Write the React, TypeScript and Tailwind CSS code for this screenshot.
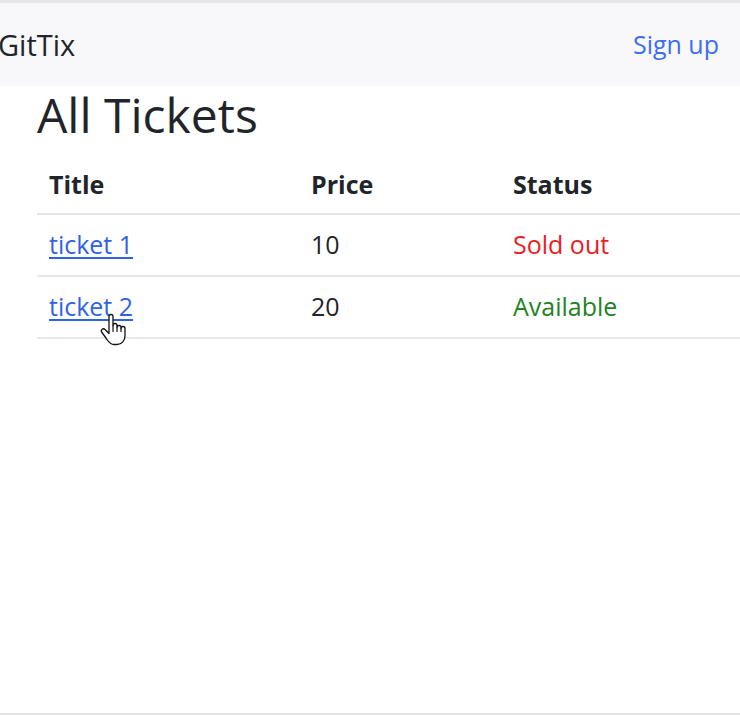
const tickets = [
  { id: 1, title: "ticket 1", price: 10, soldOut: true },
  { id: 2, title: "ticket 2", price: 20, soldOut: false },
];

function HandCursor() {
  return (
    <svg
      className="absolute left-[100px] top-[313px]"
      width="26"
      height="34"
      viewBox="0 0 26 33"
      fill="none"
    >
      <path
        d="M9 3A2 2 0 0 1 13 3V12A2 2 0 0 1 17 12V14A2 2 0 0 1 21 14V15A2 2 0 0 1 25 15V22C25 27 22 31 17 31H14C11 31 9 29 7 26L2 19A2 2 0 0 1 5 16L9 20V3Z"
        fill="#fff"
        stroke="#111"
        strokeWidth="1.3"
        strokeLinejoin="round"
      />
      <path d="M13 12V18M17 14V18M21 15V18" stroke="#111" strokeWidth="1.2" strokeLinecap="round" />
    </svg>
  );
}

export default function App() {
  return (
    <div
      className="relative h-[715px] overflow-hidden border-b-2 border-[#e4e4e4] bg-white text-[#212529]"
      style={{ fontFamily: '"Open Sans", "Noto Sans", sans-serif' }}
    >
      {/* Navbar */}
      <nav className="flex h-[86px] items-center justify-between border-t-[3px] border-[#e6e6e8] bg-[#f8f8fa] pr-[21px]">
        <a className="-ml-[2px] text-[29px] leading-none text-[#212529]">GitTix</a>
        <a className="text-[25px] leading-none text-[#3d6ef0]">Sign up</a>
      </nav>

      <div className="px-[37px]">
        <h1 className="text-[48px] leading-[1.2] font-normal">All Tickets</h1>

        <table className="mt-[8px] w-[703px] border-collapse text-[25px]">
          <thead>
            <tr className="h-[62px] border-b-2 border-[#e4e4e6] text-left">
              <th className="w-[262px] px-3 pt-[5px] font-bold">Title</th>
              <th className="w-[202px] px-3 pt-[5px] font-bold">Price</th>
              <th className="px-3 pt-[5px] font-bold">Status</th>
            </tr>
          </thead>
          <tbody>
            {tickets.map((t) => (
              <tr key={t.id} className="h-[62px] border-b-2 border-[#e8e8ea]">
                <td className="px-3">
                  <a className="text-[#2f63e6] underline underline-offset-[3px]">{t.title}</a>
                </td>
                <td className="px-3">{t.price}</td>
                <td className={t.soldOut ? "px-3 text-[#ea1c26]" : "px-3 text-[#238223]"}>
                  {t.soldOut ? "Sold out" : "Available"}
                </td>
              </tr>
            ))}
          </tbody>
        </table>
      </div>

      <HandCursor />
    </div>
  );
}
